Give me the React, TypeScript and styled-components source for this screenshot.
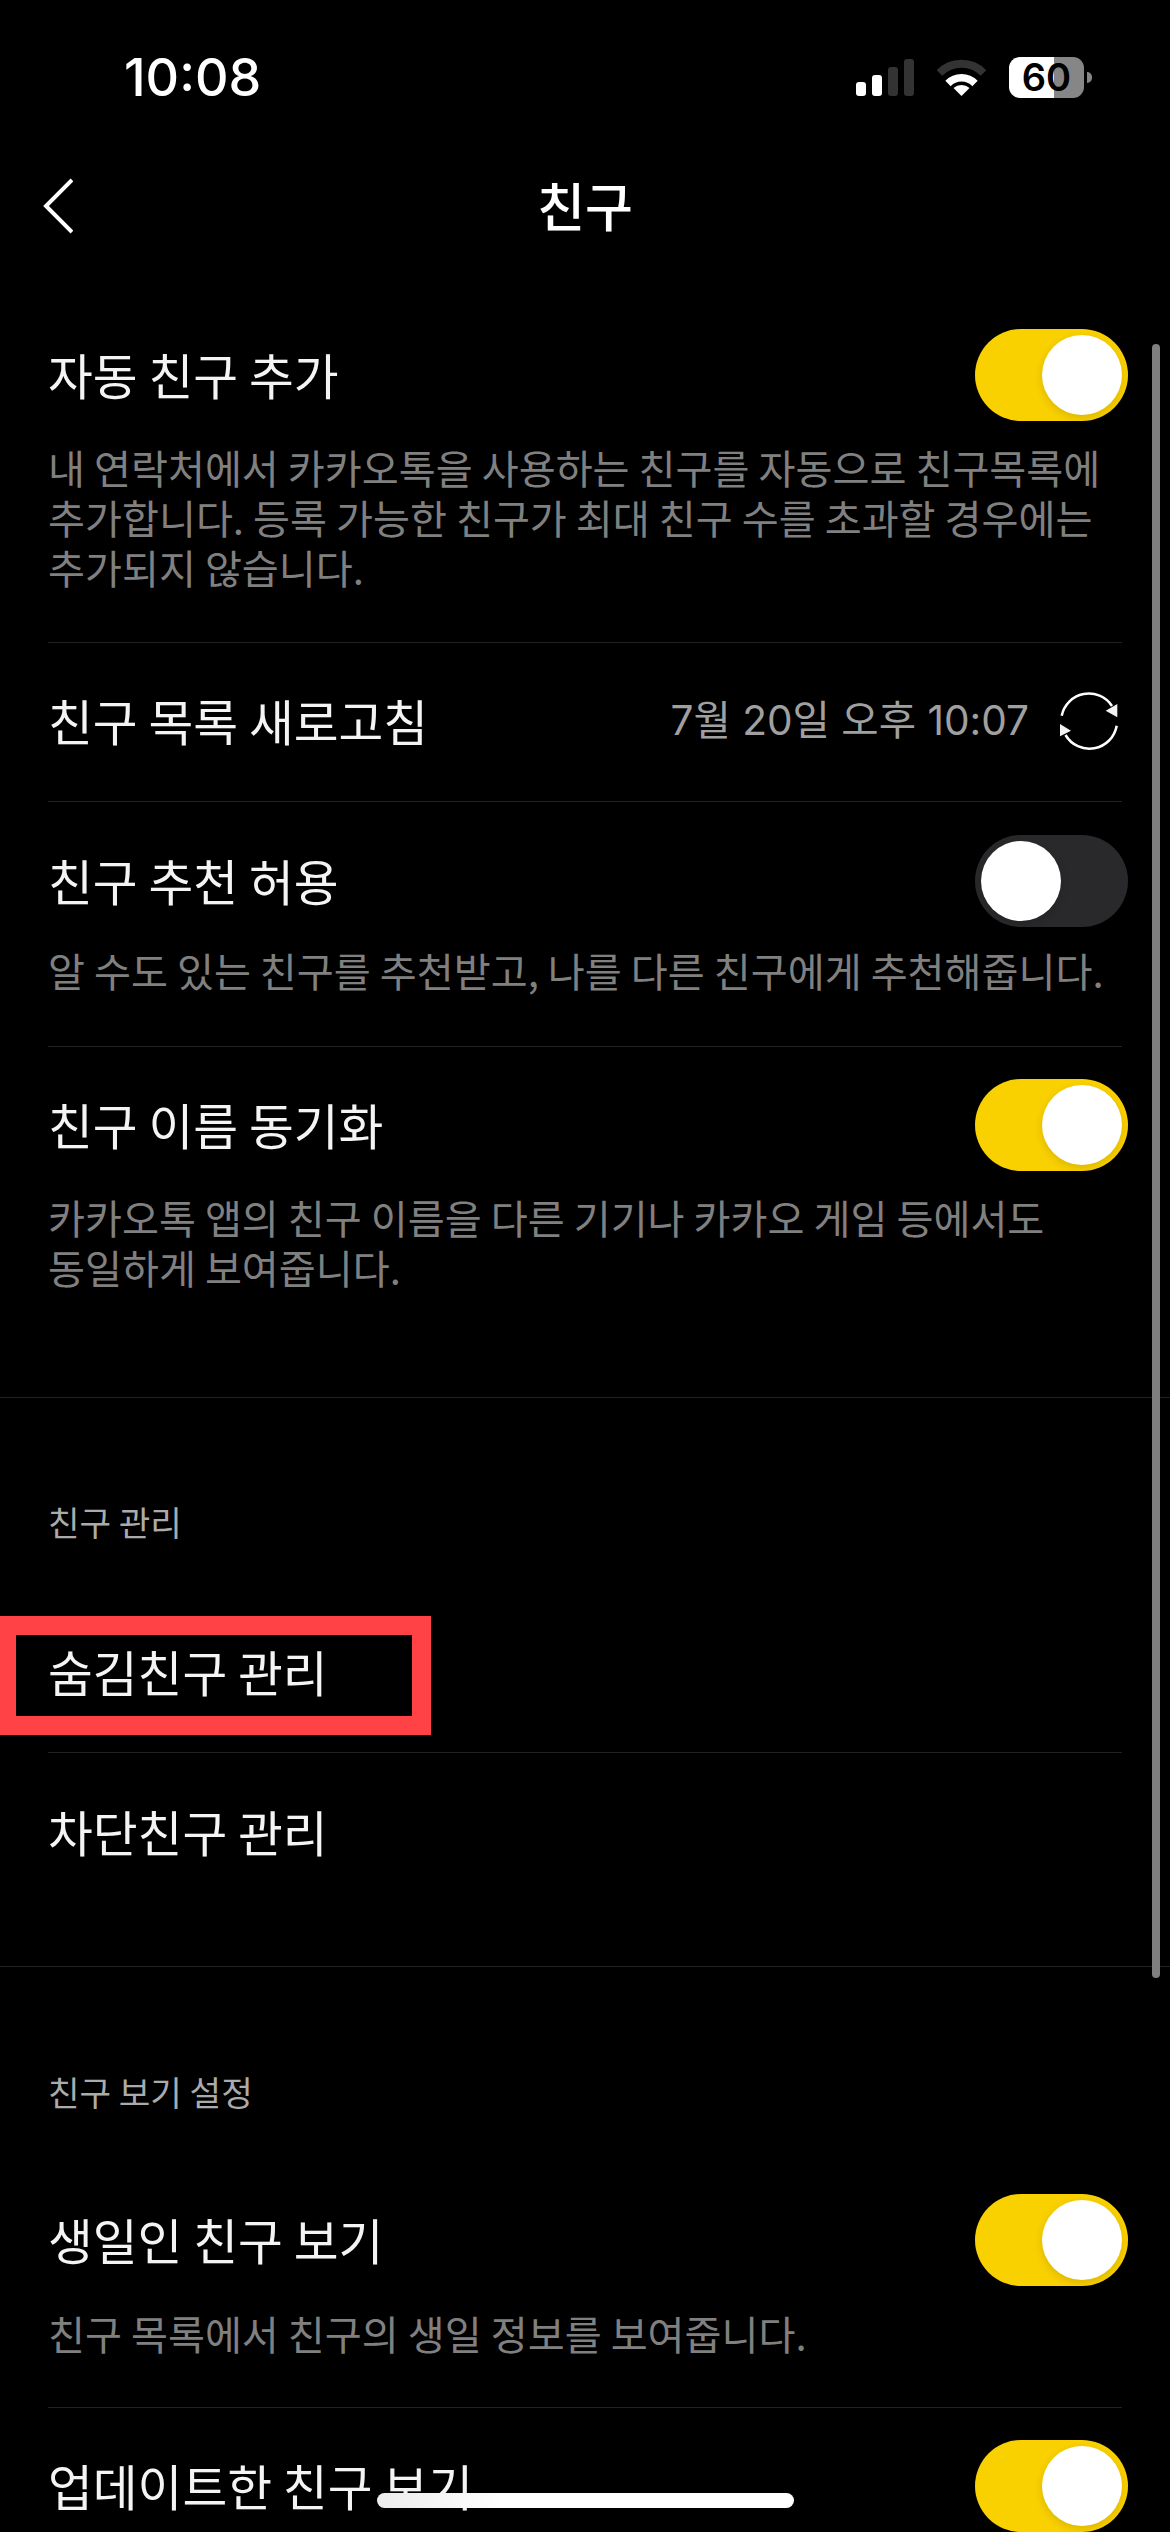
import React from "react";
import styled, { createGlobalStyle } from "styled-components";

const Global = createGlobalStyle`
  html, body { margin: 0; padding: 0; background: #000; }
  * { box-sizing: border-box; }
`;

const Screen = styled.div`
  position: relative;
  width: 1170px;
  height: 2532px;
  overflow: hidden;
  background: #000;
  color: #f4f4f4;
  font-family: "Noto Sans CJK KR", "Noto Sans", sans-serif;
`;

const StatusBar = styled.div`
  height: 150px;
  padding: 48px 78px 0 124px;
  display: flex;
  justify-content: space-between;
  align-items: flex-start;
`;

const Clock = styled.div`
  font-family: Inter, sans-serif;
  font-size: 52px;
  font-weight: 500;
  line-height: 60px;
  color: #fff;
`;

const StatusIcons = styled.div`
  display: flex;
  align-items: center;
  gap: 22px;
  margin-top: 9px;
`;

const Battery = styled.div`
  position: relative;
  width: 75px;
  height: 41px;
  border-radius: 11px;
  background: linear-gradient(90deg, #fff 0 60%, #868686 60% 100%);
  color: #000;
  font-family: Inter, sans-serif;
  font-size: 38px;
  font-weight: 600;
  line-height: 41px;
  text-align: center;
  margin-right: 8px;
  &::after {
    content: "";
    position: absolute;
    right: -8px;
    top: 15px;
    width: 5px;
    height: 11px;
    border-radius: 0 6px 6px 0;
    background: #868686;
  }
`;

const NavBar = styled.div`
  position: relative;
  height: 110px;
  display: flex;
  align-items: center;
  justify-content: center;
`;

const BackIcon = styled.svg`
  position: absolute;
  left: 43px;
  top: 28px;
`;

const Title = styled.div`
  font-size: 52px;
  font-weight: 500;
  line-height: 60px;
  color: #fff;
`;

const Setting = styled.div<{ $top: number; $bottom: number; $line?: boolean }>`
  margin: 0 0 0 48px;
  padding: ${(p) => p.$top}px 0 ${(p) => p.$bottom}px;
  width: 1074px;
  border-bottom: 1px solid ${(p) => (p.$line ? "#222" : "transparent")};
`;

const HeaderRow = styled.div`
  display: flex;
  align-items: center;
  justify-content: space-between;
  width: 1080px;
  height: 92px;
`;

const Label = styled.div`
  font-size: 48.7px;
  line-height: 60px;
  padding-bottom: 3px;
  color: #f4f4f4;
  white-space: nowrap;
`;

const Description = styled.div<{ $gap: number }>`
  margin-top: ${(p) => p.$gap}px;
  font-size: 40.2px;
  line-height: 50px;
  color: #808080;
  white-space: nowrap;
`;

const Track = styled.div<{ $on: boolean }>`
  width: 153px;
  height: 92px;
  padding: 6px;
  border-radius: 46px;
  display: flex;
  justify-content: ${(p) => (p.$on ? "flex-end" : "flex-start")};
  background: ${(p) => (p.$on ? "#f9d000" : "#29292b")};
`;

const Knob = styled.div`
  width: 80px;
  height: 80px;
  border-radius: 50%;
  background: #fff;
  box-shadow: 0 3px 8px rgba(0, 0, 0, 0.12);
`;

const RefreshRow = styled.div`
  display: flex;
  align-items: center;
  justify-content: space-between;
  width: 1074px;
  height: 159px;
  margin-left: 48px;
  border-bottom: 1px solid #222;
  padding-bottom: 2px;
`;

const RefreshMeta = styled.div`
  display: flex;
  align-items: center;
  gap: 30px;
  margin-right: 3px;
`;

const DateText = styled.div`
  font-family: Inter, "Noto Sans CJK KR", sans-serif;
  font-size: 40.6px;
  line-height: 50px;
  color: #a0a0a0;
  white-space: nowrap;
`;

const SectionRule = styled.div<{ $top?: number }>`
  height: 1px;
  margin-top: ${(p) => p.$top ?? 0}px;
  background: #222;
`;

const SectionTitle = styled.div<{ $top: number; $bottom: number }>`
  padding: ${(p) => p.$top}px 48px ${(p) => p.$bottom}px;
  font-size: 34.3px;
  line-height: 44px;
  color: #ababab;
`;

const LinkRow = styled.div<{ $height: number }>`
  position: relative;
  display: flex;
  align-items: center;
  height: ${(p) => p.$height}px;
  padding-left: 48px;
`;

const RowRule = styled.div`
  height: 1px;
  margin-left: 48px;
  width: 1074px;
  background: #222;
`;

const Highlight = styled.div`
  position: absolute;
  left: -3px;
  top: 23px;
  width: 434px;
  height: 119px;
  border: 19px solid #ff4245;
  pointer-events: none;
`;

const Scrollbar = styled.div`
  position: absolute;
  left: 1152px;
  top: 344px;
  width: 8px;
  height: 1634px;
  border-radius: 4px;
  background: #7f7f7f;
`;

const HomeIndicator = styled.div`
  position: absolute;
  left: 377px;
  top: 2493px;
  width: 417px;
  height: 15px;
  border-radius: 8px;
  background: linear-gradient(90deg, #ececec 0%, #fff 30%);
`;

const Toggle = ({ on }: { on: boolean }) => (
  <Track $on={on}>
    <Knob />
  </Track>
);

const SignalIcon = () => (
  <svg width="58" height="37" viewBox="0 0 58 37">
    <rect x="0" y="23" width="10" height="14" rx="3" fill="#fff" />
    <rect x="16" y="16" width="10" height="21" rx="3" fill="#fff" />
    <rect x="32" y="8" width="10" height="29" rx="3" fill="#333" />
    <rect x="48" y="0" width="10" height="37" rx="3" fill="#333" />
  </svg>
);

const WifiIcon = () => (
  <svg width="51" height="37" viewBox="0 0 51 37">
    <path d="M3.5 14 A 31 31 0 0 1 47.5 14" fill="none" stroke="#333" strokeWidth="8" />
    <path d="M12 24.5 A 19 19 0 0 1 39 24.5" fill="none" stroke="#fff" strokeWidth="7.5" />
    <path d="M17.5 29 A 12 12 0 0 1 33.5 29 L25.5 37 Z" fill="#fff" />
  </svg>
);

const RefreshIcon = () => (
  <svg width="60" height="60" viewBox="0 0 60 60">
    <path d="M2.7 24.7 A 27.7 27.7 0 0 1 53 15" fill="none" stroke="#fff" strokeWidth="2.5" />
    <path d="M57.7 34.7 A 27.7 27.7 0 0 1 6.5 44" fill="none" stroke="#fff" strokeWidth="2.5" />
    <polygon points="46.7,19.7 58.3,13 58.3,26.3" fill="#f2f2f2" />
    <polygon points="1,33 12,39.7 1,45.3" fill="#f2f2f2" />
  </svg>
);

export default function App() {
  return (
    <Screen>
      <Global />
      <StatusBar>
        <Clock>10:08</Clock>
        <StatusIcons>
          <SignalIcon />
          <WifiIcon />
          <Battery>60</Battery>
        </StatusIcons>
      </StatusBar>
      <NavBar>
        <BackIcon width="30" height="56" viewBox="0 0 30 56">
          <polyline points="29,2 3,28 29,54" fill="none" stroke="#fff" strokeWidth="4" />
        </BackIcon>
        <Title>친구</Title>
      </NavBar>

      <Setting $top={69} $bottom={50} $line>
        <HeaderRow>
          <Label>자동 친구 추가</Label>
          <Toggle on />
        </HeaderRow>
        <Description $gap={21}>
          내 연락처에서 카카오톡을 사용하는 친구를 자동으로 친구목록에
          <br />
          추가합니다. 등록 가능한 친구가 최대 친구 수를 초과할 경우에는
          <br />
          추가되지 않습니다.
        </Description>
      </Setting>

      <RefreshRow>
        <Label>친구 목록 새로고침</Label>
        <RefreshMeta>
          <DateText>7월 20일 오후 10:07</DateText>
          <RefreshIcon />
        </RefreshMeta>
      </RefreshRow>

      <Setting $top={33} $bottom={51} $line>
        <HeaderRow>
          <Label>친구 추천 허용</Label>
          <Toggle on={false} />
        </HeaderRow>
        <Description $gap={18}>
          알 수도 있는 친구를 추천받고, 나를 다른 친구에게 추천해줍니다.
        </Description>
      </Setting>

      <Setting $top={32} $bottom={104}>
        <HeaderRow>
          <Label>친구 이름 동기화</Label>
          <Toggle on />
        </HeaderRow>
        <Description $gap={21}>
          카카오톡 앱의 친구 이름을 다른 기기나 카카오 게임 등에서도
          <br />
          동일하게 보여줍니다.
        </Description>
      </Setting>

      <SectionRule />
      <SectionTitle $top={101} $bottom={50}>
        친구 관리
      </SectionTitle>
      <LinkRow $height={159}>
        <Label>숨김친구 관리</Label>
        <Highlight />
      </LinkRow>
      <RowRule />
      <LinkRow $height={158}>
        <Label>차단친구 관리</Label>
      </LinkRow>
      <SectionRule $top={55} />
      <SectionTitle $top={102} $bottom={81}>
        친구 보기 설정
      </SectionTitle>

      <Setting $top={0} $bottom={49} $line>
        <HeaderRow>
          <Label>생일인 친구 보기</Label>
          <Toggle on />
        </HeaderRow>
        <Description $gap={22}>친구 목록에서 친구의 생일 정보를 보여줍니다.</Description>
      </Setting>

      <Setting $top={32} $bottom={0}>
        <HeaderRow>
          <Label>업데이트한 친구 보기</Label>
          <Toggle on />
        </HeaderRow>
      </Setting>

      <Scrollbar />
      <HomeIndicator />
    </Screen>
  );
}
